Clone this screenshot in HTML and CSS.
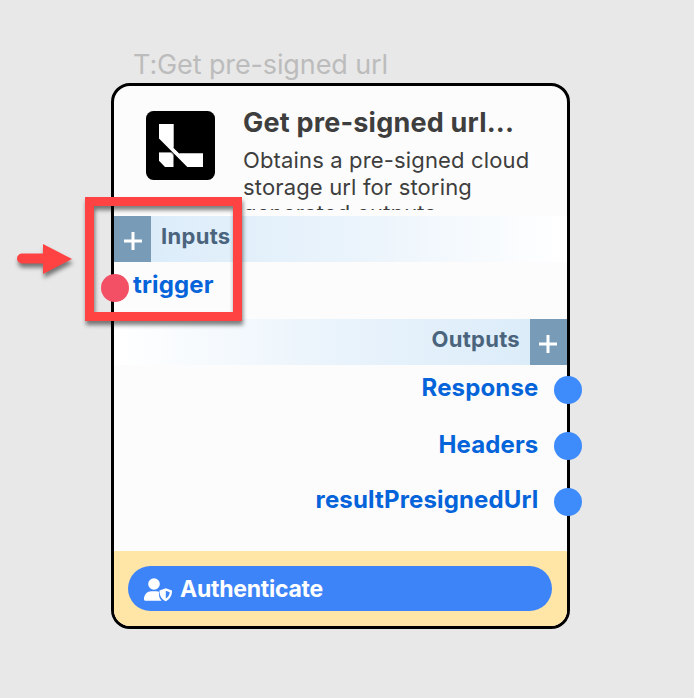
FILE: index.html
```html
<!DOCTYPE html>
<html lang="en">
<head>
<meta charset="utf-8">
<title>Get pre-signed url</title>
<link rel="stylesheet" href="styles.css">
</head>
<body>
<main class="canvas">
  <div class="node-label">T:Get pre-signed url</div>
  <section class="node">
    <header class="head">
      <svg class="logo" viewBox="0 0 69 69">
        <rect width="69" height="69" rx="7.5" fill="#000"/>
        <path fill="#fff" d="M13 13H27.7V37L33 42.2H57V56H41.3L13 27.5ZM13 41.2H25.5L27.5 43V56H19L13 49.8Z"/>
        <path d="M27.7 36.5L33.5 42.2M13 40.9H24.5L28 44.4" stroke="#000" stroke-width=".6" fill="none"/>
      </svg>
      <div class="about">
        <h1 class="title">Get pre-signed url...</h1>
        <p class="desc">Obtains a pre-signed cloud storage url for storing generated outputs</p>
      </div>
    </header>
    <div class="bar bar-in"><span class="add"><svg viewBox="0 0 18 18"><path d="M9 0V18M0 9H18"/></svg></span><span class="bar-name">Inputs</span></div>
    <div class="inputs"><span class="port port-in"></span><span class="port-name trigger">trigger</span></div>
    <div class="bar bar-out"><span class="bar-name">Outputs</span><span class="add"><svg viewBox="0 0 18 18"><path d="M9 0V18M0 9H18"/></svg></span></div>
    <div class="outputs">
      <div class="out"><span class="port-name response">Response</span><span class="port"></span></div>
      <div class="out"><span class="port-name headers">Headers</span><span class="port"></span></div>
      <div class="out"><span class="port-name result">resultPresignedUrl</span><span class="port"></span></div>
    </div>
    <footer class="foot">
      <div class="auth">
        <svg class="user" viewBox="0 0 28 24">
          <circle cx="10" cy="6" r="5.8"/>
          <path d="M7.5 13.2H12.5Q14 13.2 15 13.8Q14.3 19.5 17.6 22.8H1.5Q0 22.8 0 21.3C0 16.5 3 13.2 7.5 13.2Z"/>
          <path fill-rule="evenodd" d="M21.8 10.2L28 12.6C28.2 17.2 26 21.3 21.8 23.2C17.5 21.3 15.3 17.2 15.5 12.6ZM21.8 12.7V20.5C24.4 19 25.6 16.7 25.7 14.2Z"/>
        </svg>
        <span class="auth-name">Authenticate</span>
      </div>
    </footer>
  </section>
  <svg class="arrow" viewBox="0 0 58 36"><path d="M5 12.5H26V3L55 18L26 33V22.5H5A5 5 0 0 1 5 12.5Z"/></svg>
  <div class="callout"></div>
</main>
</body>
</html>
```
FILE: styles.css
```css
* { box-sizing: border-box; }
body { margin: 0; background: #e8e8e8; font-family: Inter, "Liberation Sans", sans-serif; }
.canvas { position: relative; height: 698px; padding: 47px 0 0 111px; overflow: hidden; }
.node-label { height: 36px; padding-left: 22px; font-size: 27px; letter-spacing: -0.12px; line-height: 36px; color: #bcbcbc; white-space: nowrap; }
.node { display: flex; flex-direction: column; width: 459px; height: 546px; border: 3px solid #000; border-radius: 19px; background: #fcfcfc; }
.head { display: flex; height: 130px; padding-left: 32px; }
.logo { width: 69px; height: 69px; margin-top: 25px; flex: none; }
.about { width: 300px; height: 124px; margin-left: 28px; padding-top: 20px; overflow: hidden; color: #3e3e3e; }
.title { margin: 0; font-size: 27px; font-weight: 700; letter-spacing: 0.2px; line-height: 34px; white-space: nowrap; }
.desc { margin: 7px 0 0; font-size: 22px; letter-spacing: 0.15px; line-height: 26.5px; }
.bar { display: flex; height: 46px; color: #4b647d; }
.bar-in { background: linear-gradient(90deg, #d9ebf9, #e9f3fb 50%, #fff); }
.bar-out { justify-content: flex-end; background: linear-gradient(270deg, #d9ebf9, #e9f3fb 50%, #fff); }
.add { display: flex; justify-content: center; width: 37px; padding: 16px 0 0 1px; background: #789cb7; }
.bar-out .add { padding-left: 0; }
.add svg { width: 18px; height: 18px; margin-left: -1px; stroke: #fff; stroke-width: 3; }
.bar-in .add svg { margin-left: 0; }
.bar-name { margin: 0 10px; font-size: 22px; font-weight: 700; letter-spacing: 0.3px; line-height: 41px; }
.inputs { display: flex; height: 57px; }
.port { width: 28px; height: 28px; border-radius: 50%; background: #3e8bfc; flex: none; }
.port-in { margin: 12px 4px 0 -13px; background: #f35066; }
.port-name { font-size: 24px; font-weight: 700; letter-spacing: 0.14px; line-height: 46px; color: #0564da; }
.outputs { height: 186px; }
.out { display: flex; justify-content: flex-end; height: 56px; margin-right: -15px; }
.out .port { margin: 11px 0 0 15.6px; }
.headers { line-height: 48px; }
.foot { height: 75px; padding: 15px 15px 0 14px; background: #ffe6a6; border-radius: 0 0 16px 16px; }
.auth { display: flex; align-items: center; height: 45px; padding-left: 16px; border-radius: 23px; background: #3e84f9; color: #fff; }
.user { width: 28px; height: 24px; margin-top: 2px; fill: #fff; }
.auth-name { margin-left: 8px; font-size: 23px; font-weight: 700; letter-spacing: -0.25px; }
.arrow { position: absolute; left: 17px; top: 241px; width: 58px; height: 36px; fill: #ff4343; overflow: visible; filter: drop-shadow(1px 4px 2px rgba(0,0,0,.5)); }
.callout { position: absolute; left: 85px; top: 197px; width: 157px; height: 124px; border: 9px solid #ff4343; filter: drop-shadow(1px 4px 2px rgba(0,0,0,.5)); }
```
